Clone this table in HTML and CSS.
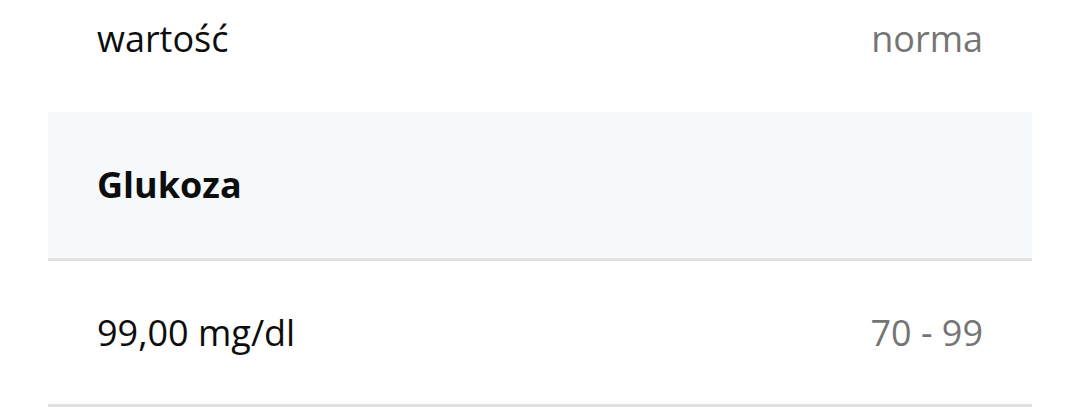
FILE: index.html
```html
<!DOCTYPE html>
<html lang="pl">
<head>
    <meta charset="UTF-8">
    <meta name="viewport" content="width=device-width, initial-scale=1.0">
    <title>Wyniki badań</title>
    <link rel="stylesheet" href="styles.css">
</head>
<body>
    <div class="results">
        <div class="row head-row">
            <span class="value">wartość</span>
            <span class="norm">norma</span>
        </div>
        <div class="group-title">Glukoza</div>
        <div class="row result-row">
            <span class="value">99,00 mg/dl</span>
            <span class="norm">70 - 99</span>
        </div>
    </div>
</body>
</html>
```
FILE: styles.css
```css
body {
    margin: 0;
    font-family: "Open Sans", "Noto Sans", sans-serif;
    background: #fff;
    color: #0d0d0d;
}
.results {
    margin: 0 47px 0 48px;
}
.row {
    display: flex;
    justify-content: space-between;
    align-items: center;
    padding: 0 49px;
    font-size: 36px;
    box-sizing: border-box;
}
.head-row {
    height: 112px;
    padding-bottom: 36px;
}
.group-title {
    background: #f5f9fc;
    height: 149px;
    box-sizing: border-box;
    padding: 0 49px 2px;
    display: flex;
    align-items: center;
    font-size: 36px;
    font-weight: bold;
    border-bottom: 3px solid #e0e0e0;
}
.result-row {
    height: 146px;
    border-bottom: 3px solid #e0e0e0;
}
.norm {
    color: #757575;
}
```
